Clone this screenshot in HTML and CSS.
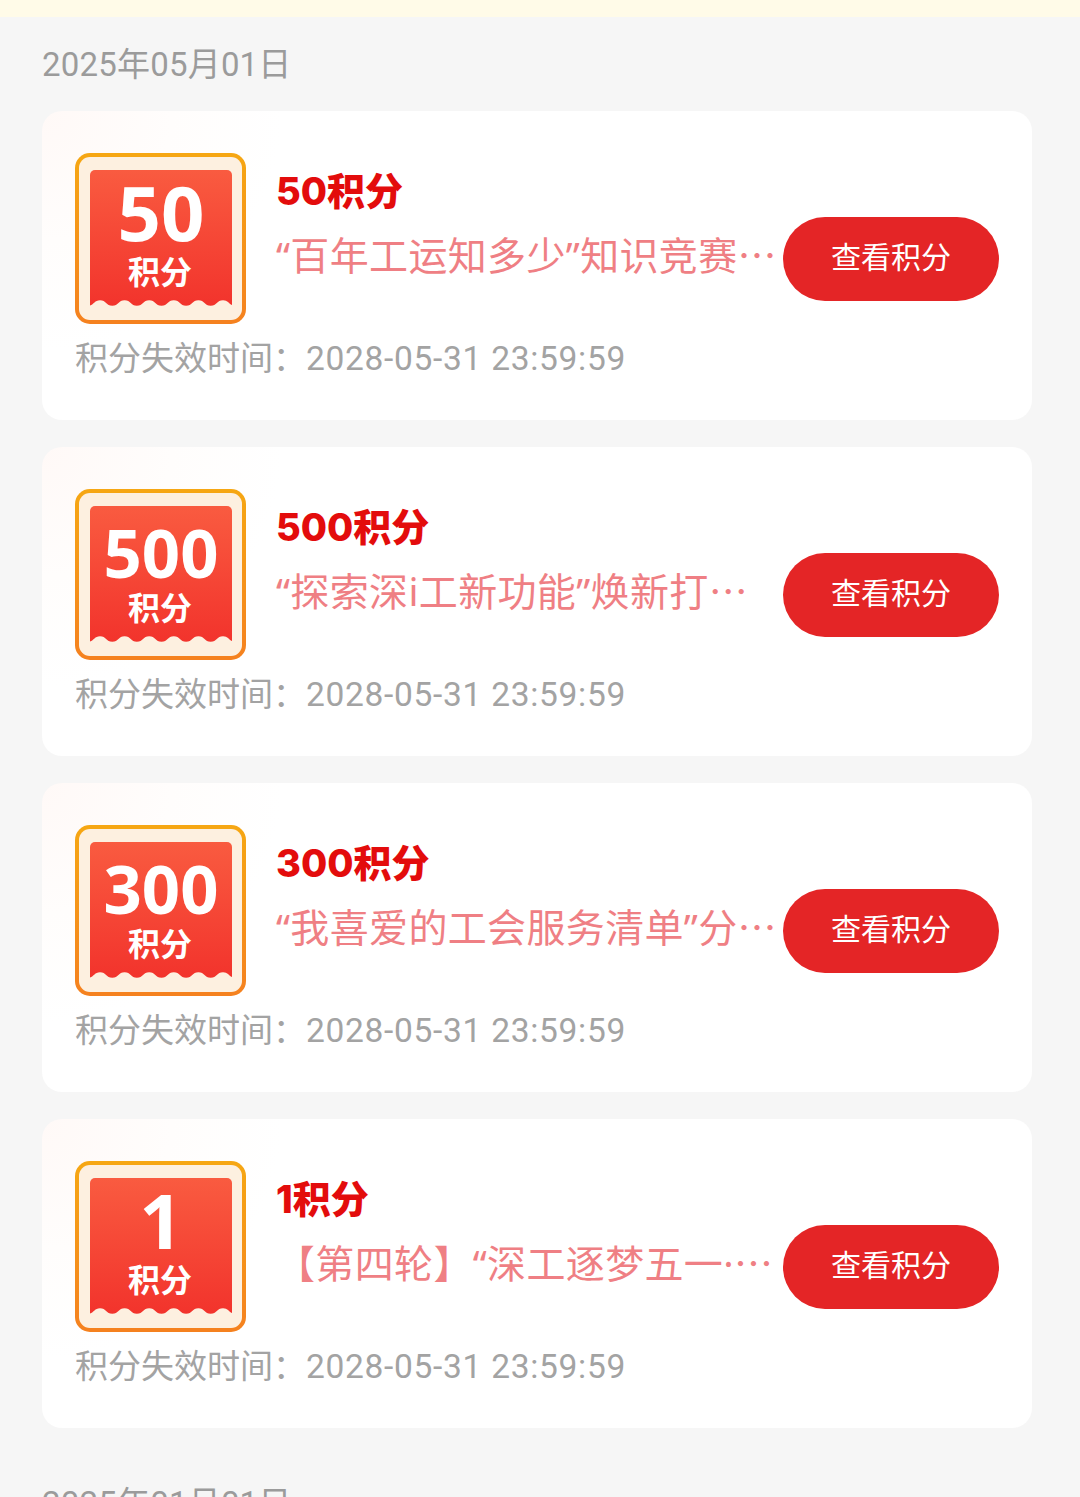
FILE: index.html
```html
<!DOCTYPE html>
<html lang="zh-CN">
<head>
<meta charset="utf-8">
<title>积分</title>
<link rel="stylesheet" href="styles.css">
</head>
<body>
<div class="notice"></div>
<h2 class="date">2025年05月01日</h2>
<section class="card">
  <div class="top">
    <div class="badge"><div class="ticket"><span class="num">50</span><span class="unit">积分</span>
      <svg class="wave" viewBox="0 0 142 7"><path d="M-2.300 7V5.800C3.850 5.800 3.850 .3 10 .3S16.150 5.800 22.300 5.800 28.450 .3 34.600 .3 40.750 5.800 46.900 5.800 53.050 .3 59.200 .3 65.350 5.800 71.500 5.800 77.650 .3 83.800 .3 89.950 5.800 96.100 5.800 102.250 .3 108.400 .3 114.550 5.800 120.700 5.800 126.850 .3 133 .3 139.150 5.800 145.300 5.800V7Z"/></svg></div></div>
    <div class="info"><div class="title">50积分</div><div class="desc">“百年工运知多少”知识竞赛<span class="more">…</span></div></div>
    <a class="btn">查看积分</a>
  </div>
  <div class="expire">积分失效时间：<span class="time">2028-05-31 23:59:59</span></div>
</section>
<section class="card">
  <div class="top">
    <div class="badge"><div class="ticket"><span class="num long">500</span><span class="unit">积分</span>
      <svg class="wave" viewBox="0 0 142 7"><path d="M-2.300 7V5.800C3.850 5.800 3.850 .3 10 .3S16.150 5.800 22.300 5.800 28.450 .3 34.600 .3 40.750 5.800 46.900 5.800 53.050 .3 59.200 .3 65.350 5.800 71.500 5.800 77.650 .3 83.800 .3 89.950 5.800 96.100 5.800 102.250 .3 108.400 .3 114.550 5.800 120.700 5.800 126.850 .3 133 .3 139.150 5.800 145.300 5.800V7Z"/></svg></div></div>
    <div class="info"><div class="title">500积分</div><div class="desc">“探索深i工新功能”焕新打<span class="more">…</span></div></div>
    <a class="btn">查看积分</a>
  </div>
  <div class="expire">积分失效时间：<span class="time">2028-05-31 23:59:59</span></div>
</section>
<section class="card">
  <div class="top">
    <div class="badge"><div class="ticket"><span class="num long">300</span><span class="unit">积分</span>
      <svg class="wave" viewBox="0 0 142 7"><path d="M-2.300 7V5.800C3.850 5.800 3.850 .3 10 .3S16.150 5.800 22.300 5.800 28.450 .3 34.600 .3 40.750 5.800 46.900 5.800 53.050 .3 59.200 .3 65.350 5.800 71.500 5.800 77.650 .3 83.800 .3 89.950 5.800 96.100 5.800 102.250 .3 108.400 .3 114.550 5.800 120.700 5.800 126.850 .3 133 .3 139.150 5.800 145.300 5.800V7Z"/></svg></div></div>
    <div class="info"><div class="title">300积分</div><div class="desc">“我喜爱的工会服务清单”分<span class="more">…</span></div></div>
    <a class="btn">查看积分</a>
  </div>
  <div class="expire">积分失效时间：<span class="time">2028-05-31 23:59:59</span></div>
</section>
<section class="card">
  <div class="top">
    <div class="badge"><div class="ticket"><span class="num">1</span><span class="unit">积分</span>
      <svg class="wave" viewBox="0 0 142 7"><path d="M-2.300 7V5.800C3.850 5.800 3.850 .3 10 .3S16.150 5.800 22.300 5.800 28.450 .3 34.600 .3 40.750 5.800 46.900 5.800 53.050 .3 59.200 .3 65.350 5.800 71.500 5.800 77.650 .3 83.800 .3 89.950 5.800 96.100 5.800 102.250 .3 108.400 .3 114.550 5.800 120.700 5.800 126.850 .3 133 .3 139.150 5.800 145.300 5.800V7Z"/></svg></div></div>
    <div class="info"><div class="title">1积分</div><div class="desc">【第四轮】“深工逐梦五一·<span class="more">…</span></div></div>
    <a class="btn">查看积分</a>
  </div>
  <div class="expire">积分失效时间：<span class="time">2028-05-31 23:59:59</span></div>
</section>
<h2 class="date">2025年01月01日</h2>
</body>
</html>
```
FILE: styles.css
```css
* { box-sizing: border-box; }
html, body { margin: 0; padding: 0; }
body {
  width: 1080px;
  height: 1497px;
  overflow: hidden;
  background: #f6f6f6;
  font-family: Roboto, "Noto Sans CJK SC", sans-serif;
}
.notice { height: 17px; background: #fffbe8; }
.date {
  margin: 0;
  padding: 27px 42px 0;
  height: 94px;
  font-size: 33px;
  line-height: 42px;
  font-weight: 400;
  letter-spacing: .2px;
  color: #9b9b9b;
}
.card {
  margin: 0 48px 27px 42px;
  height: 309px;
  padding: 42px 33px 0;
  border-radius: 20px;
  background: radial-gradient(circle at 0 0, #fff9f7 0, #fffdfc 130px, #fff 240px);
}
.card + .date { padding-top: 28px; }
.top { display: flex; align-items: flex-start; }
.badge {
  flex: none;
  width: 171px;
  height: 171px;
  padding: 13px 10px 13px 11px;
  border-radius: 15px;
  border: 4px solid transparent;
  background:
    linear-gradient(#fdf0e0, #fdf0e0) padding-box,
    linear-gradient(#f6a713, #f5811f) border-box;
}
.ticket {
  position: relative;
  height: 137px;
  display: flex;
  flex-direction: column;
  align-items: center;
  border-radius: 5px 5px 0 0;
  background: linear-gradient(#f95b40, #f2332c);
  color: #fff;
}
.num {
  font-family: "Noto Sans", sans-serif;
  font-weight: 700;
  font-size: 76px;
  line-height: 84px;
  height: 84px;
}
.num.long { font-size: 67px; line-height: 80px; padding-top: 6px; }
.unit {
  font-family: "Noto Sans CJK SC", sans-serif;
  font-weight: 700;
  font-size: 32px;
  line-height: 32px;
  padding-right: 2px;
}
.wave { position: absolute; left: 0; bottom: 0; width: 100%; height: 7px; display: block; fill: #fdf0e0; }
.info { flex: 1; min-width: 0; padding: 15px 0 0 30px; white-space: nowrap; }
.title {
  font-family: Inter, "Noto Sans CJK SC", sans-serif;
  font-weight: 800;
  font-size: 38px;
  line-height: 46px;
  color: #e30c0c;
}
.desc {
  margin-top: 16px;
  font-family: "Noto Sans", "Noto Sans CJK SC", sans-serif;
  font-size: 39px;
  line-height: 46px;
  letter-spacing: .35px;
  color: #ef7f84;
}
.more { font-family: "Noto Sans CJK SC", sans-serif; }
.btn {
  flex: none;
  width: 216px;
  height: 84px;
  margin-top: 64px;
  border-radius: 42px;
  background: #e42526;
  color: #fff;
  font-size: 30px;
  line-height: 82px;
  text-align: center;
}
.expire {
  margin-top: 13px;
  font-size: 33px;
  line-height: 44px;
  color: #a3a3a3;
}
.time { font-size: 33.500px; letter-spacing: .7px; }
```
